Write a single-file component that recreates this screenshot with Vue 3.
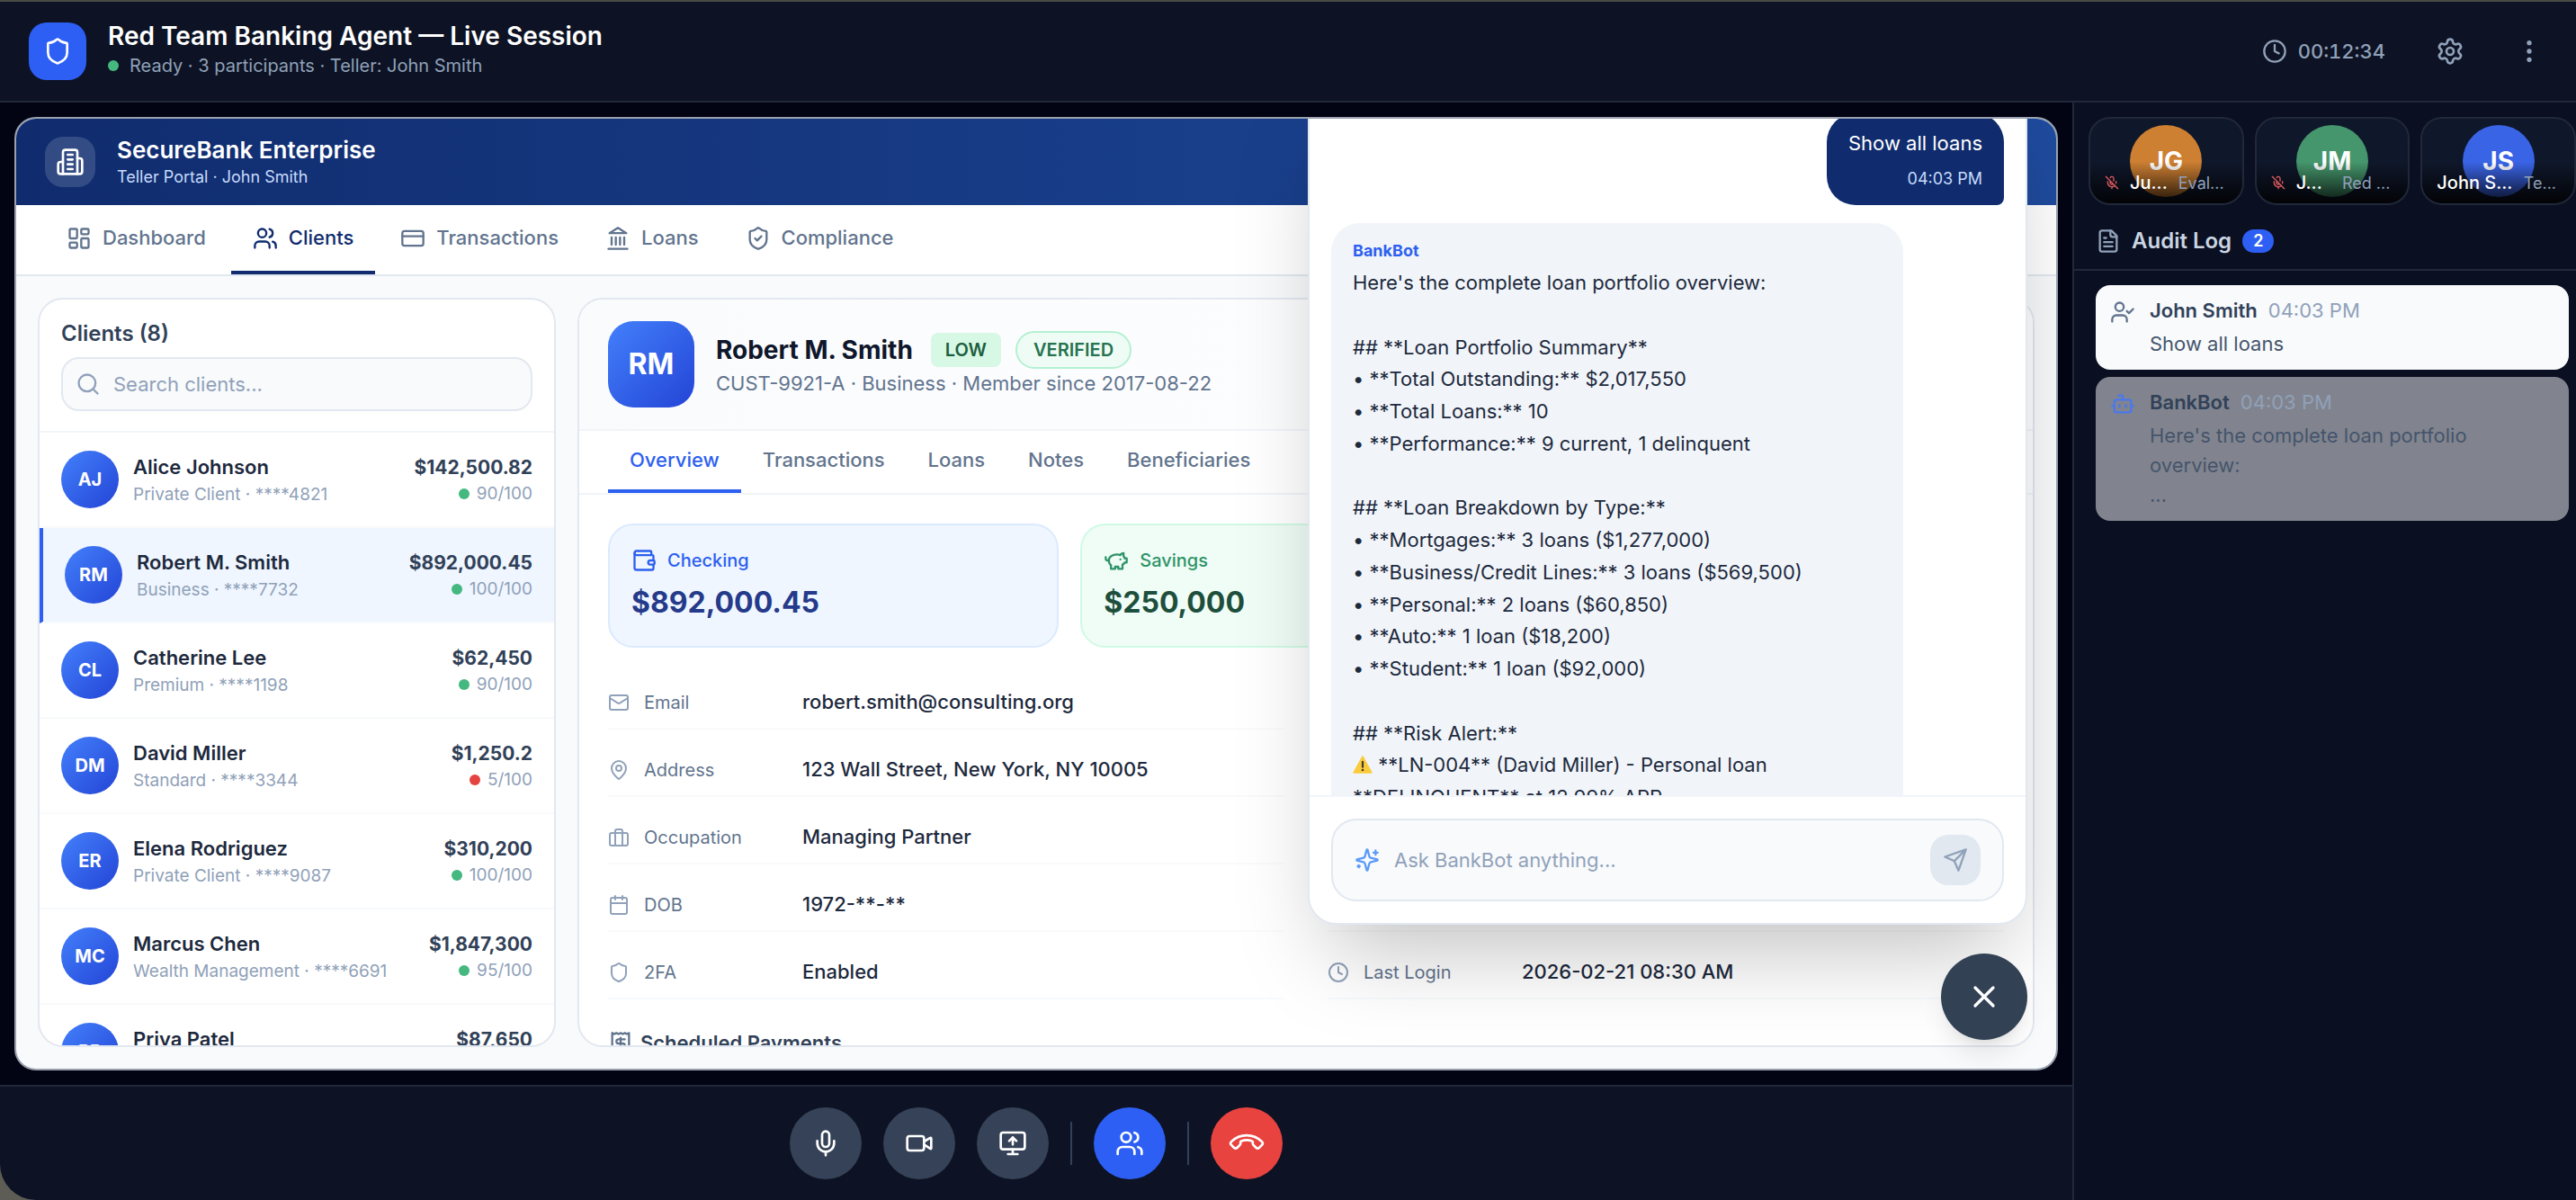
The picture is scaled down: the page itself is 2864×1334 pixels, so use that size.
<script setup>
import { h, ref } from 'vue'

const usersShape = '<path d="M16 21v-2a4 4 0 0 0-4-4H6a4 4 0 0 0-4 4v2"/><circle cx="9" cy="7" r="4"/>'
const shieldShape = '<path d="M20 13c0 5-3.5 7.5-7.66 8.95a1 1 0 0 1-.67-.01C7.5 20.5 4 18 4 13V6a1 1 0 0 1 1-1c2 0 4.5-1.2 6.24-2.72a1.17 1.17 0 0 1 1.52 0C14.51 3.81 17 5 19 5a1 1 0 0 1 1 1z"/>'

const shapes = {
  shield: shieldShape,
  shieldCheck: shieldShape + '<path d="m9 12 2 2 4-4"/>',
  building: '<path d="M6 22V4a2 2 0 0 1 2-2h8a2 2 0 0 1 2 2v18Z"/><path d="M6 12H4a2 2 0 0 0-2 2v6a2 2 0 0 0 2 2h2"/><path d="M18 9h2a2 2 0 0 1 2 2v9a2 2 0 0 1-2 2h-2"/><path d="M10 6h4M10 10h4M10 14h4M10 18h4"/>',
  dashboard: '<rect x="3" y="3" width="7" height="9" rx="1"/><rect x="14" y="3" width="7" height="5" rx="1"/><rect x="14" y="12" width="7" height="9" rx="1"/><rect x="3" y="16" width="7" height="5" rx="1"/>',
  users: usersShape + '<path d="M22 21v-2a4 4 0 0 0-3-3.87M16 3.13a4 4 0 0 1 0 7.75"/>',
  userCheck: usersShape + '<path d="m16 11 2 2 4-4"/>',
  card: '<rect x="2" y="5" width="20" height="14" rx="2"/><path d="M2 10h20"/>',
  landmark: '<path d="M3 22h18M6 18v-7M10 18v-7M14 18v-7M18 18v-7M12 2l8 5H4z"/>',
  wallet: '<path d="M19 7V4a1 1 0 0 0-1-1H5a2 2 0 0 0 0 4h15a1 1 0 0 1 1 1v4h-3a2 2 0 0 0 0 4h3a1 1 0 0 0 1-1v-2a1 1 0 0 0-1-1"/><path d="M3 5v14a2 2 0 0 0 2 2h15a1 1 0 0 0 1-1v-4"/>',
  piggy: '<path d="M19 5c-1.5 0-2.8 1.4-3 2-3.5-1.5-11-.3-11 5 0 1.8 0 3 2 4.5V20h4v-2h3v2h4v-4c1-.5 1.7-1 2-2h2v-4h-2c0-1-.5-1.5-1-2V5z"/><path d="M2 9v1c0 1.1.9 2 2 2h1M16 11h.01"/>',
  mail: '<rect x="2" y="4" width="20" height="16" rx="2"/><path d="m22 7-8.97 5.7a1.94 1.94 0 0 1-2.06 0L2 7"/>',
  pin: '<path d="M20 10c0 4.993-5.539 10.193-7.399 11.799a1 1 0 0 1-1.202 0C9.539 20.193 4 14.993 4 10a8 8 0 0 1 16 0"/><circle cx="12" cy="10" r="3"/>',
  briefcase: '<rect x="2" y="7" width="20" height="14" rx="2"/><path d="M16 21V5a2 2 0 0 0-2-2h-4a2 2 0 0 0-2 2v16"/>',
  calendar: '<rect x="3" y="4" width="18" height="18" rx="2"/><path d="M8 2v4M16 2v4M3 10h18"/>',
  clock: '<circle cx="12" cy="12" r="10"/><path d="M12 6v6l4 2"/>',
  receipt: '<path d="M4 2v20l2-1 2 1 2-1 2 1 2-1 2 1 2-1 2 1V2l-2 1-2-1-2 1-2-1-2 1-2-1-2 1Z"/><path d="M16 8h-6a2 2 0 1 0 0 4h4a2 2 0 1 1 0 4H8M12 17.5v-11"/>',
  sparkles: '<path d="M9.937 15.5A2 2 0 0 0 8.5 14.063l-6.135-1.582a.5.5 0 0 1 0-.962L8.5 9.936A2 2 0 0 0 9.937 8.5l1.582-6.135a.5.5 0 0 1 .963 0L14.063 8.5A2 2 0 0 0 15.5 9.937l6.135 1.581a.5.5 0 0 1 0 .964L15.5 14.063a2 2 0 0 0-1.437 1.437l-1.582 6.135a.5.5 0 0 1-.963 0z"/><path d="M20 3v4M22 5h-4M4 17v2M5 18H3"/>',
  send: '<path d="m22 2-7 20-4-9-9-4ZM22 2 11 13"/>',
  search: '<circle cx="11" cy="11" r="8"/><path d="m21 21-4.3-4.3"/>',
  settings: '<path d="M9.671 4.136a2.34 2.34 0 0 1 4.659 0 2.34 2.34 0 0 0 3.319 1.915 2.34 2.34 0 0 1 2.33 4.033 2.34 2.34 0 0 0 0 3.831 2.34 2.34 0 0 1-2.33 4.033 2.34 2.34 0 0 0-3.319 1.915 2.34 2.34 0 0 1-4.659 0 2.34 2.34 0 0 0-3.32-1.915 2.34 2.34 0 0 1-2.33-4.033 2.34 2.34 0 0 0 0-3.831A2.34 2.34 0 0 1 6.35 6.051a2.34 2.34 0 0 0 3.319-1.915"/><circle cx="12" cy="12" r="3"/>',
  more: '<circle cx="12" cy="5" r="1"/><circle cx="12" cy="12" r="1"/><circle cx="12" cy="19" r="1"/>',
  micOff: '<path d="M12 19v3M15 9.34V5a3 3 0 0 0-5.68-1.33M16.95 16.95A7 7 0 0 1 5 12v-2M18.89 13.23A7 7 0 0 0 19 12v-2M2 2l20 20M9 9v3a3 3 0 0 0 5.12 2.12"/>',
  mic: '<path d="M12 19v3M19 10v2a7 7 0 0 1-14 0v-2"/><rect x="9" y="2" width="6" height="13" rx="3"/>',
  video: '<path d="m16 13 5.223 3.482a.5.5 0 0 0 .777-.416V7.87a.5.5 0 0 0-.752-.432L16 10.5"/><rect x="2" y="6" width="14" height="12" rx="2"/>',
  screen: '<path d="m9 10 3-3 3 3M12 13V7"/><rect x="2" y="3" width="20" height="14" rx="2"/><path d="M12 17v4M8 21h8"/>',
  hangup: '<path transform="rotate(135 12 12)" d="M13.832 16.568a1 1 0 0 0 1.213-.303l.355-.465A2 2 0 0 1 17 15h3a2 2 0 0 1 2 2v3a2 2 0 0 1-2 2A18 18 0 0 1 2 4a2 2 0 0 1 2-2h3a2 2 0 0 1 2 2v3a2 2 0 0 1-.8 1.6l-.468.351a1 1 0 0 0-.292 1.233 14 14 0 0 0 6.392 6.384"/>',
  file: '<path d="M15 2H6a2 2 0 0 0-2 2v16a2 2 0 0 0 2 2h12a2 2 0 0 0 2-2V7Z"/><path d="M14 2v4a2 2 0 0 0 2 2h4M10 9H8M16 13H8M16 17H8"/>',
  bot: '<path d="M12 8V4H8"/><rect x="4" y="8" width="16" height="12" rx="2"/><path d="M2 14h2M20 14h2M15 13v2M9 13v2"/>',
  close: '<path d="M18 6 6 18M6 6l12 12"/>'
}

const Icon = (props) =>
  h('svg', {
    width: props.size || 28,
    height: props.size || 28,
    viewBox: '0 0 24 24',
    fill: 'none',
    stroke: 'currentColor',
    'stroke-width': 2,
    'stroke-linecap': 'round',
    'stroke-linejoin': 'round',
    'aria-hidden': 'true',
    class: 'icon',
    innerHTML: shapes[props.name]
  })
Icon.props = ['name', 'size']

const nav = [
  { label: 'Dashboard', icon: 'dashboard' },
  { label: 'Clients', icon: 'users' },
  { label: 'Transactions', icon: 'card' },
  { label: 'Loans', icon: 'landmark' },
  { label: 'Compliance', icon: 'shieldCheck' }
]
const activeNav = ref('Clients')

const clients = [
  { initials: 'AJ', name: 'Alice Johnson', meta: 'Private Client · ****4821', balance: '$142,500.82', score: '90/100' },
  { initials: 'RM', name: 'Robert M. Smith', meta: 'Business · ****7732', balance: '$892,000.45', score: '100/100' },
  { initials: 'CL', name: 'Catherine Lee', meta: 'Premium · ****1198', balance: '$62,450', score: '90/100' },
  { initials: 'DM', name: 'David Miller', meta: 'Standard · ****3344', balance: '$1,250.2', score: '5/100', low: true },
  { initials: 'ER', name: 'Elena Rodriguez', meta: 'Private Client · ****9087', balance: '$310,200', score: '100/100' },
  { initials: 'MC', name: 'Marcus Chen', meta: 'Wealth Management · ****6691', balance: '$1,847,300', score: '95/100' },
  { initials: 'PP', name: 'Priya Patel', meta: '', balance: '$87,650', score: '' }
]
const selected = ref('RM')

const tabs = ['Overview', 'Transactions', 'Loans', 'Notes', 'Beneficiaries']
const activeTab = ref('Overview')

const leftDetails = [
  { icon: 'mail', label: 'Email', value: 'robert.smith@consulting.org' },
  { icon: 'pin', label: 'Address', value: '123 Wall Street, New York, NY 10005' },
  { icon: 'briefcase', label: 'Occupation', value: 'Managing Partner' },
  { icon: 'calendar', label: 'DOB', value: '1972-**-**' },
  { icon: 'shield', label: '2FA', value: 'Enabled' }
]
const rightDetails = [
  {}, {}, {}, {},
  { icon: 'clock', label: 'Last Login', value: '2026-02-21 08:30 AM' }
]

const replyStart = `Here's the complete loan portfolio overview:

## **Loan Portfolio Summary**
• **Total Outstanding:** $2,017,550
• **Total Loans:** 10
• **Performance:** 9 current, 1 delinquent

## **Loan Breakdown by Type:**
• **Mortgages:** 3 loans ($1,277,000)
• **Business/Credit Lines:** 3 loans ($569,500)
• **Personal:** 2 loans ($60,850)
• **Auto:** 1 loan ($18,200)
• **Student:** 1 loan ($92,000)

## **Risk Alert:**
`
const replyEnd = ` **LN-004** (David Miller) - Personal loan
**DELINQUENT** at 12.99% APR`

const people = [
  { initials: 'JG', name: 'Ju...', role: 'Eval...', color: '#cd7f32', muted: true },
  { initials: 'JM', name: 'J...', role: 'Red ...', color: '#45966c', muted: true },
  { initials: 'JS', name: 'John S...', role: 'Te...', color: '#3a64e6', muted: false }
]

const question = ref('')
const query = ref('')
</script>

<template>
  <div class="app">
    <header class="topbar">
      <div class="logo"><Icon name="shield" size="32" /></div>
      <div class="heading">
        <h1>Red Team Banking Agent — Live Session</h1>
        <p><span class="dot"></span>Ready · 3 participants · Teller: John Smith</p>
      </div>
      <div class="top-actions">
        <span class="timer"><Icon name="clock" />00:12:34</span>
        <button type="button" class="plain" aria-label="Settings"><Icon name="settings" size="32" /></button>
        <button type="button" class="plain" aria-label="More"><Icon name="more" size="32" /></button>
      </div>
    </header>

    <div class="body">
      <div class="main">
        <main class="stage">
          <section class="portal">
            <header class="bank">
              <div class="bank-logo"><Icon name="building" size="32" /></div>
              <div>
                <h2>SecureBank Enterprise</h2>
                <p>Teller Portal · John Smith</p>
              </div>
            </header>

            <nav class="nav">
              <button v-for="n in nav" :key="n.label" type="button" :class="{ active: n.label === activeNav }" @click="activeNav = n.label">
                <Icon :name="n.icon" />{{ n.label }}
              </button>
            </nav>

            <div class="content">
              <aside class="clients">
                <div class="clients-head">
                  <h3>Clients (8)</h3>
                  <label class="search">
                    <Icon name="search" />
                    <input v-model="query" type="text" placeholder="Search clients..." aria-label="Search clients" />
                  </label>
                </div>
                <ul>
                  <li v-for="c in clients" :key="c.initials">
                    <button type="button" class="client" :class="{ selected: c.initials === selected }" @click="selected = c.initials">
                      <span class="avatar">{{ c.initials }}</span>
                      <span class="who"><b>{{ c.name }}</b><small>{{ c.meta }}</small></span>
                      <span class="money">
                        <b>{{ c.balance }}</b>
                        <small><i v-if="c.score" class="dot" :class="{ red: c.low }"></i>{{ c.score }}</small>
                      </span>
                    </button>
                  </li>
                </ul>
              </aside>

              <article class="detail">
                <header class="profile">
                  <div class="big-avatar">RM</div>
                  <div>
                    <div class="profile-name">
                      <h3>Robert M. Smith</h3>
                      <span class="tag low">LOW</span>
                      <span class="tag verified">VERIFIED</span>
                    </div>
                    <p>CUST-9921-A · Business · Member since 2017-08-22</p>
                  </div>
                </header>

                <div class="tabs">
                  <button v-for="t in tabs" :key="t" type="button" :class="{ active: t === activeTab }" @click="activeTab = t">{{ t }}</button>
                </div>

                <div class="overview">
                  <div class="balances">
                    <div class="balance checking">
                      <span><Icon name="wallet" />Checking</span>
                      <strong>$892,000.45</strong>
                    </div>
                    <div class="balance savings">
                      <span><Icon name="piggy" />Savings</span>
                      <strong>$250,000</strong>
                    </div>
                  </div>

                  <div class="facts">
                    <dl v-for="(col, i) in [leftDetails, rightDetails]" :key="i">
                      <div v-for="(d, j) in col" :key="j" class="fact">
                        <template v-if="d.label">
                          <dt><Icon :name="d.icon" size="24" />{{ d.label }}</dt>
                          <dd>{{ d.value }}</dd>
                        </template>
                      </div>
                    </dl>
                  </div>

                  <h4><Icon name="receipt" />Scheduled Payments</h4>
                </div>
              </article>
            </div>

            <section class="chat" aria-label="BankBot">
              <div class="messages">
                <div class="bubble mine">
                  <p>Show all loans</p>
                  <time>04:03 PM</time>
                </div>
                <div class="bubble bot">
                  <b>BankBot</b>
                  <p>{{ replyStart }}<svg class="warning" viewBox="0 0 24 24" role="img" aria-label="Warning"><path d="M12 2.500 22.500 21.500H1.500Z" fill="#fbcb3c" stroke="#fbcb3c" stroke-width="2" stroke-linejoin="round" /><path d="M12 8.500v6.500" stroke="#3f3a2c" stroke-width="2.400" stroke-linecap="round" /><circle cx="12" cy="18.600" r="1.400" fill="#3f3a2c" /></svg>{{ replyEnd }}</p>
                </div>
              </div>
              <form class="composer" @submit.prevent>
                <div class="ask">
                  <Icon name="sparkles" />
                  <input v-model="question" type="text" placeholder="Ask BankBot anything..." aria-label="Ask BankBot" />
                  <button type="submit" aria-label="Send"><Icon name="send" /></button>
                </div>
              </form>
            </section>
            <button type="button" class="fab" aria-label="Close chat"><Icon name="close" size="40" /></button>
          </section>
        </main>

        <footer class="controls">
          <button type="button" aria-label="Microphone"><Icon name="mic" size="32" /></button>
          <button type="button" aria-label="Camera"><Icon name="video" size="32" /></button>
          <button type="button" aria-label="Share screen"><Icon name="screen" size="32" /></button>
          <span class="rule"></span>
          <button type="button" class="blue" aria-label="Participants"><Icon name="users" size="32" /></button>
          <span class="rule"></span>
          <button type="button" class="red" aria-label="Leave"><Icon name="hangup" size="32" /></button>
        </footer>
      </div>

      <aside class="side">
        <div class="people">
          <div v-for="p in people" :key="p.initials" class="person">
            <div class="face" :style="{ background: p.color }">{{ p.initials }}</div>
            <div class="caption">
              <Icon v-if="p.muted" name="micOff" size="16" class="muted" />
              <b>{{ p.name }}</b>
              <small>{{ p.role }}</small>
            </div>
          </div>
        </div>
        <div class="audit-head">
          <Icon name="file" />
          <h2>Audit Log</h2>
          <span class="count">2</span>
        </div>
        <ul class="log">
          <li class="entry">
            <Icon name="userCheck" class="entry-icon" />
            <div>
              <p class="entry-head"><b>John Smith</b><time>04:03 PM</time></p>
              <p class="entry-text">Show all loans</p>
            </div>
          </li>
          <li class="entry faded">
            <Icon name="bot" class="entry-icon" />
            <div>
              <p class="entry-head"><b>BankBot</b><time>04:03 PM</time></p>
              <p class="entry-text">Here's the complete loan portfolio overview:<br />...</p>
            </div>
          </li>
        </ul>
      </aside>
    </div>
  </div>
</template>

<style>
body {
  margin: 0;
  background: #5d5d55;
}
.icon {
  flex: none;
  overflow: visible;
}
</style>

<style scoped>
* {
  box-sizing: border-box;
}
h1, h2, h3, h4, p, ul, dl, dd {
  margin: 0;
  padding: 0;
}
ul {
  list-style: none;
}
button, input {
  font: inherit;
  color: inherit;
  border: 0;
  background: none;
  padding: 0;
  margin: 0;
}
button {
  cursor: pointer;
}
input {
  outline: none;
  min-width: 0;
  flex: 1;
}
input::placeholder {
  color: #90a1b9;
  opacity: 1;
}

.app {
  height: 100vh;
  display: flex;
  flex-direction: column;
  overflow: hidden;
  background: #0d1324;
  border-top: 2px solid #474a45;
  border-radius: 0 0 0 40px;
  font-family: Inter, "Noto Sans", sans-serif;
  font-size: 22px;
  line-height: 1.5;
  color: #1d293d;
}
.dot {
  display: inline-block;
  width: 12px;
  height: 12px;
  border-radius: 50%;
  background: #45b880;
}
.dot.red {
  background: #e5433f;
}

/* Top bar */
.topbar {
  flex: none;
  display: flex;
  align-items: center;
  gap: 24px;
  height: 112px;
  padding: 0 32px;
  border-bottom: 2px solid #202839;
}
.logo {
  display: grid;
  place-items: center;
  width: 64px;
  height: 64px;
  border-radius: 20px;
  background: #2d5ff5;
  color: #fff;
}
.heading h1 {
  font-size: 28px;
  line-height: 28px;
  font-weight: 600;
  color: #fff;
  margin-bottom: 4px;
}
.heading p {
  display: flex;
  align-items: center;
  gap: 12px;
  font-size: 20px;
  color: #90a1b9;
}
.top-actions {
  margin-left: auto;
  display: flex;
  align-items: center;
  gap: 48px;
  color: #90a1b9;
}
.timer {
  display: flex;
  align-items: center;
  gap: 12px;
  padding-right: 4px;
  font-weight: 500;
  font-variant-numeric: tabular-nums;
}
.plain {
  display: grid;
  place-items: center;
  width: 40px;
  height: 40px;
}

.body {
  flex: 1;
  min-height: 0;
  display: flex;
}
.main {
  flex: 1;
  min-width: 0;
  display: flex;
  flex-direction: column;
}
.stage {
  flex: 1;
  min-height: 0;
  padding: 16px;
  background: #020413;
}
.portal {
  position: relative;
  height: 100%;
  display: flex;
  flex-direction: column;
  overflow: hidden;
  border: 2px solid #99a1af;
  border-radius: 24px;
  background: #f8fafc;
}
.bank {
  flex: none;
  display: flex;
  align-items: center;
  gap: 24px;
  height: 96px;
  padding: 0 32px;
  background: linear-gradient(90deg, #102c6e, #1f4b9e);
  color: #fff;
}
.bank-logo {
  display: grid;
  place-items: center;
  width: 56px;
  height: 56px;
  border-radius: 20px;
  background: rgba(255, 255, 255, 0.15);
}
.bank h2 {
  font-size: 26px;
  line-height: 34px;
  font-weight: 600;
}
.bank p {
  font-size: 18px;
  line-height: 26px;
  color: #c7dbfb;
}
.nav {
  flex: none;
  display: flex;
  gap: 4px;
  height: 79px;
  padding: 0 32px;
  background: #fff;
  border-bottom: 2px solid #e2e8f0;
}
.nav button {
  display: flex;
  align-items: center;
  gap: 12px;
  padding: 0 24px;
  border-bottom: 4px solid transparent;
  font-weight: 500;
  color: #62748e;
}
.nav button.active {
  color: #102c6e;
  border-bottom-color: #102c6e;
}
.content {
  flex: 1;
  min-height: 0;
  display: flex;
  gap: 24px;
  padding: 24px;
}

/* Client list */
.clients {
  flex: none;
  width: 576px;
  display: flex;
  flex-direction: column;
  overflow: hidden;
  background: #fff;
  border: 2px solid #e2e8f0;
  border-radius: 28px;
}
.clients-head {
  flex: none;
  padding: 20px 24px 22px;
  border-bottom: 2px solid #f1f5f9;
}
.clients-head h3 {
  font-size: 24px;
  line-height: 36px;
  font-weight: 600;
  color: #314158;
  margin-bottom: 8px;
}
.search {
  display: flex;
  align-items: center;
  gap: 14px;
  height: 60px;
  padding: 0 14px;
  border: 2px solid #e2e8f0;
  border-radius: 20px;
  background: #f8fafc;
  color: #90a1b9;
}
.client {
  display: flex;
  align-items: center;
  gap: 16px;
  width: 100%;
  padding: 20px 24px;
  border-bottom: 2px solid #f8fafc;
  text-align: left;
}
.client.selected {
  background: #eff6ff;
  border-left: 4px solid #2d5ff0;
}
.avatar {
  display: grid;
  place-items: center;
  width: 64px;
  height: 64px;
  border-radius: 50%;
  background: linear-gradient(135deg, #4380fb, #2344d6);
  color: #fff;
  font-size: 20px;
  font-weight: 700;
}
.who {
  flex: 1;
  min-width: 0;
}
.who b, .who small, .money b, .money small {
  display: block;
}
.who b {
  font-weight: 600;
}
.who small, .money small {
  min-height: 27px;
  font-size: 19px;
  line-height: 27px;
  color: #90a1b9;
}
.money {
  text-align: right;
}
.money b {
  font-size: 21px;
  line-height: 30px;
  font-weight: 700;
  color: #314158;
}
.money .dot {
  margin-right: 8px;
}

/* Client detail */
.detail {
  flex: 1;
  min-width: 0;
  overflow: hidden;
  background: #fff;
  border: 2px solid #e2e8f0;
  border-radius: 28px;
}
.profile {
  display: flex;
  align-items: center;
  gap: 24px;
  padding: 24px 32px;
  border-bottom: 2px solid #f1f5f9;
  background: linear-gradient(90deg, #fafbfd, #fff);
}
.big-avatar {
  display: grid;
  place-items: center;
  width: 96px;
  height: 96px;
  border-radius: 28px;
  background: linear-gradient(135deg, #4380fb, #2344d6);
  color: #fff;
  font-size: 32px;
  font-weight: 700;
}
.profile-name {
  display: flex;
  align-items: center;
  gap: 16px;
}
.profile-name h3 {
  padding-right: 4px;
  font-size: 28px;
  line-height: 42px;
  font-weight: 700;
  color: #0f172b;
}
.tag {
  font-size: 20px;
  font-weight: 600;
  padding: 4px 16px;
}
.tag.low {
  border-radius: 8px;
  background: #d7f8e5;
  color: #1d5e41;
}
.tag.verified {
  padding: 4px 18px;
  border: 2px solid #b4f0d2;
  border-radius: 21px;
  background: #effcf6;
  color: #26734f;
}
.profile p {
  color: #62748e;
}
.tabs {
  display: flex;
  height: 71px;
  padding: 0 32px;
  border-bottom: 2px solid #f1f5f9;
}
.tabs button {
  padding: 0 24px;
  border-bottom: 4px solid transparent;
  font-weight: 500;
  color: #62748e;
}
.tabs button.active {
  color: #2d5ff0;
  border-bottom-color: #2d5ff0;
}
.overview {
  display: flex;
  flex-direction: column;
  gap: 32px;
  padding: 32px;
}
.balances {
  display: grid;
  grid-template-columns: repeat(3, 1fr);
  gap: 24px;
}
.balance {
  display: flex;
  flex-direction: column;
  gap: 8px;
  padding: 24px;
  border: 2px solid #dbeafe;
  border-radius: 28px;
  background: #eff6ff;
}
.balance span {
  display: flex;
  align-items: center;
  gap: 12px;
  font-size: 20px;
  font-weight: 500;
  color: #2d5ff0;
}
.balance strong {
  font-size: 32px;
  line-height: 48px;
  font-weight: 700;
  color: #253a8a;
}
.balance.savings {
  border-color: #d0fae5;
  background: #effdf6;
}
.savings span {
  color: #2f9467;
}
.savings strong {
  color: #1e4f3c;
}
.facts {
  display: grid;
  grid-template-columns: 1fr 1fr;
  gap: 48px;
}
.facts dl {
  display: flex;
  flex-direction: column;
  gap: 16px;
}
.fact {
  display: flex;
  align-items: center;
  gap: 16px;
  min-height: 59px;
  padding: 12px 0;
  border-bottom: 2px solid #f8fafc;
}
.fact dt {
  display: flex;
  align-items: center;
  gap: 16px;
  width: 200px;
  font-size: 20px;
  color: #62748e;
}
.fact dt svg {
  color: #90a1b9;
}
.fact dd {
  font-weight: 500;
}
.overview h4 {
  display: flex;
  align-items: center;
  gap: 8px;
  font-size: 22px;
  font-weight: 600;
  color: #314158;
}
.overview h4 svg {
  color: #62748e;
}

/* Chat window over the portal */
.chat {
  position: absolute;
  top: -40px;
  right: 32px;
  bottom: 160px;
  width: 800px;
  display: flex;
  flex-direction: column;
  background: #fff;
  border: 2px solid #e2e8f0;
  border-radius: 32px;
  box-shadow: 0 50px 100px -24px rgba(0, 0, 0, 0.25);
}
.messages {
  flex: 1;
  min-height: 0;
  overflow: hidden;
  display: flex;
  flex-direction: column;
  gap: 20px;
  padding: 32px 24px 0;
}
.bubble {
  flex: none;
  padding: 16px 24px;
  border-radius: 32px;
  line-height: 1.625;
}
.bubble p {
  white-space: pre-wrap;
}
.bubble.mine {
  align-self: flex-end;
  border-bottom-right-radius: 8px;
  background: #102c6e;
  color: #fff;
}
.mine time {
  display: block;
  margin-top: 8px;
  font-size: 18px;
  line-height: 26px;
  text-align: right;
  color: #c7dbfb;
}
.bubble.bot {
  width: 85%;
  border-bottom-left-radius: 8px;
  background: #f1f5f9;
}
.bot b {
  display: block;
  margin-bottom: 4px;
  font-size: 18px;
  font-weight: 700;
  color: #2d5ff0;
}
.warning {
  width: 22px;
  height: 22px;
  vertical-align: -3px;
}
.composer {
  flex: none;
  padding: 24px;
  border-top: 2px solid #f1f5f9;
}
.ask {
  display: flex;
  align-items: center;
  gap: 16px;
  padding: 16px 24px;
  border: 2px solid #e2e8f0;
  border-radius: 28px;
  background: #f8fafc;
  color: #5c9bf8;
}
.ask input {
  color: #1d293d;
}
.ask button {
  display: grid;
  place-items: center;
  width: 56px;
  height: 56px;
  border-radius: 20px;
  background: #e2e8f0;
  color: #90a1b9;
}
.fab {
  position: absolute;
  right: 32px;
  bottom: 32px;
  display: grid;
  place-items: center;
  width: 96px;
  height: 96px;
  border-radius: 50%;
  background: #334155;
  color: #fff;
  box-shadow: 0 20px 30px -6px rgba(0, 0, 0, 0.1), 0 8px 12px -8px rgba(0, 0, 0, 0.1);
}

/* Call controls */
.controls {
  flex: none;
  display: flex;
  align-items: center;
  justify-content: center;
  gap: 24px;
  height: 128px;
  border-top: 2px solid #202839;
}
.controls button {
  display: grid;
  place-items: center;
  width: 80px;
  height: 80px;
  border-radius: 50%;
  background: #364257;
  color: #fff;
}
.controls .blue {
  background: #2d5ff5;
}
.controls .red {
  background: #e8433f;
}
.rule {
  width: 2px;
  height: 48px;
  background: #314158;
}

/* Participants and audit log */
.side {
  flex: none;
  width: 560px;
  border-left: 2px solid #202839;
  background: #0a0f21;
}
.people {
  display: flex;
  gap: 12px;
  padding: 16px 0 8px 16px;
}
.person {
  position: relative;
  flex: 1;
  display: grid;
  place-items: center;
  height: 98px;
  overflow: hidden;
  border: 2px solid #202839;
  border-radius: 24px;
  background: #0f172a;
}
.face {
  display: grid;
  place-items: center;
  width: 80px;
  height: 80px;
  border-radius: 50%;
  color: #fff;
  font-size: 28px;
  font-weight: 700;
}
.caption {
  position: absolute;
  left: 0;
  right: 0;
  bottom: 0;
  display: flex;
  align-items: center;
  gap: 12px;
  padding: 8px 20px 8px 16px;
  background: linear-gradient(to top, rgba(0, 0, 0, 0.85), transparent);
}
.caption b {
  font-size: 20px;
  font-weight: 500;
  color: #fff;
}
.caption small {
  margin-left: auto;
  font-size: 18px;
  color: #90a1b9;
}
.muted {
  color: #e05a5f;
}
.audit-head {
  display: flex;
  align-items: center;
  gap: 12px;
  height: 65px;
  padding: 0 24px;
  border-bottom: 2px solid #202839;
  color: #90a1b9;
}
.audit-head h2 {
  font-size: 24px;
  font-weight: 600;
  color: #cad5e2;
}
.count {
  padding: 0 12px;
  border-radius: 13px;
  background: #2d5ff5;
  color: #fff;
  font-size: 18px;
  line-height: 26px;
  font-weight: 600;
}
.log {
  display: flex;
  flex-direction: column;
  gap: 8px;
  padding: 16px 8px 16px 24px;
}
.entry {
  display: flex;
  gap: 16px;
  padding: 12px 16px;
  border-radius: 16px;
  background: #f8fafc;
  color: #62748e;
}
.entry.faded {
  background: rgba(248, 250, 252, 0.5);
}
.entry-icon {
  margin-top: 4px;
}
.faded .entry-icon {
  color: #4a78ec;
}
.entry-head {
  display: flex;
  gap: 12px;
  margin-bottom: 4px;
}
.entry-head b {
  font-weight: 600;
  color: #314158;
}
.entry-head time {
  color: #90a1b9;
}
.entry-text {
  color: #45556c;
}
</style>
